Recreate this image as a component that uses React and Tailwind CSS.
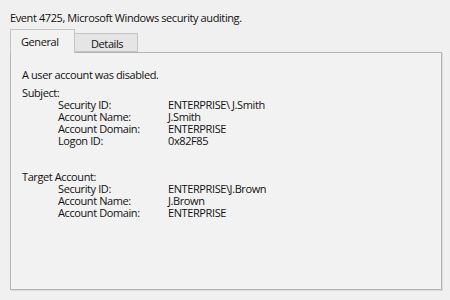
const subject = [
  ["Security ID:", "ENTERPRISE\\ J.Smith"],
  ["Account Name:", "J.Smith"],
  ["Account Domain:", "ENTERPRISE"],
  ["Logon ID:", "0x82F85"],
];

const target = [
  ["Security ID:", "ENTERPRISE\\J.Brown"],
  ["Account Name:", "J.Brown"],
  ["Account Domain:", "ENTERPRISE"],
];

function Fields({ rows }) {
  return (
    <div className="grid grid-cols-[110px_1fr] pl-[36px]">
      {rows.map(([label, value]) => (
        <div key={label} className="contents">
          <span>{label}</span>
          <span>{value}</span>
        </div>
      ))}
    </div>
  );
}

export default function App() {
  return (
    <div className="w-[450px] h-[300px] bg-[#f0f0f0] text-[11px] leading-[12px] tracking-[-0.4px] text-[#111] font-['Open_Sans',sans-serif] px-[10px] pt-[12px] overflow-hidden">
      <div className="h-[17px]">Event 4725, Microsoft Windows security auditing.</div>
      <div className="flex items-end h-[23px]">
        <div className="relative z-10 -mb-px h-[24px] w-[65px] border border-b-0 border-[#c4c4c4] bg-[#f2f2f2] pl-[10px] pt-[6px]">
          General
        </div>
        <div className="h-[19px] w-[63px] border border-l-0 border-[#c4c4c4] bg-[#e5e5e5] pl-[16px] pt-[4px]">
          Details
        </div>
      </div>
      <div className="w-[432px] h-[238px] border border-[#b4b4b4] bg-[#f2f2f2] pl-[11px] pt-[16px] shadow-[1px_1px_0_#dcdcdc]">
        <div className="mb-[6px]">A user account was disabled.</div>
        <div>Subject:</div>
        <Fields rows={subject} />
        <div className="mt-[24px]">Target Account:</div>
        <Fields rows={target} />
      </div>
    </div>
  );
}
